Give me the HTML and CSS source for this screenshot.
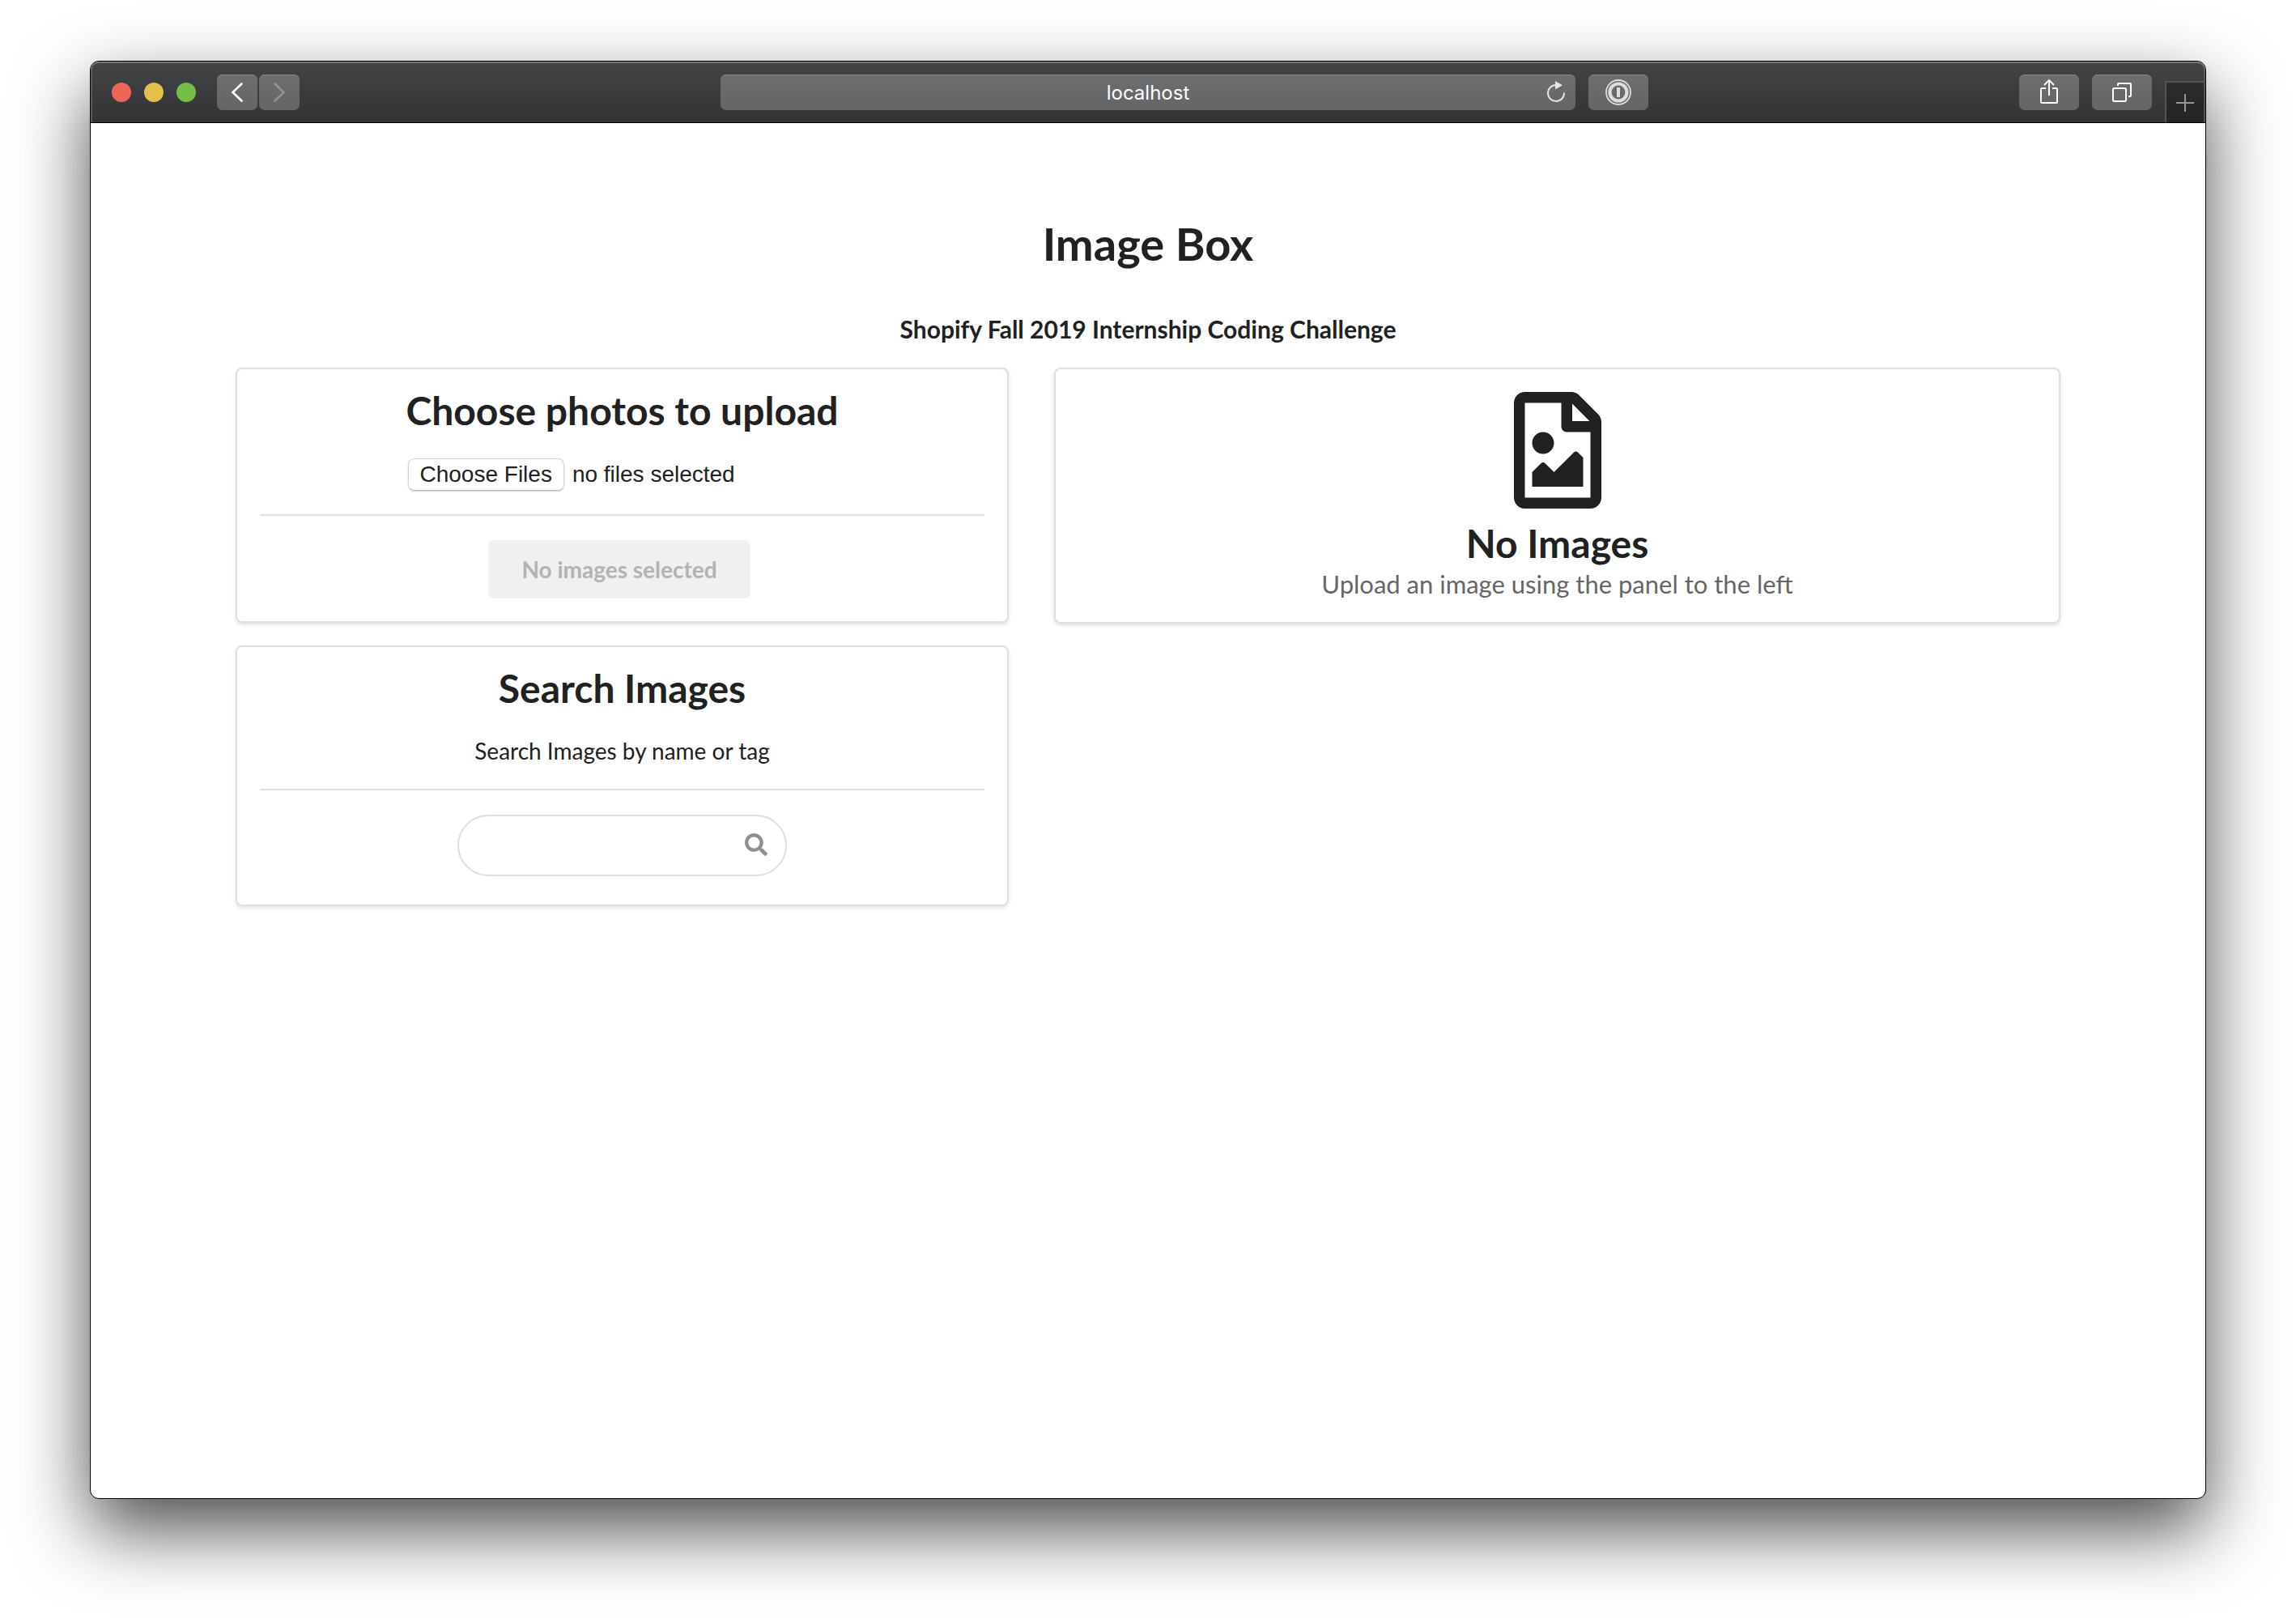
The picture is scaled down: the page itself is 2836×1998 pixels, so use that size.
FILE: index.html
```html
<!DOCTYPE html>
<html lang="en">
<head>
<meta charset="utf-8">
<title>Image Box</title>
<link rel="stylesheet" href="styles.css">
</head>
<body>
<div class="window">
  <header class="toolbar">
    <div class="toolbar-start">
      <div class="lights">
        <button class="light light-close" type="button" aria-label="Close"></button>
        <button class="light light-minimize" type="button" aria-label="Minimize"></button>
        <button class="light light-zoom" type="button" aria-label="Zoom"></button>
      </div>
      <nav class="history">
        <button class="tool tool-nav" type="button" aria-label="Back">
          <svg width="50" height="44" viewBox="0 0 50 44" fill="none" stroke="#fff" stroke-width="2.6" stroke-linecap="round"><path d="M30.5 11.5 19.5 22l11 10.500"/></svg>
        </button>
        <button class="tool tool-nav" type="button" aria-label="Forward" disabled>
          <svg width="50" height="44" viewBox="0 0 50 44" fill="none" stroke="#929394" stroke-width="2.6" stroke-linecap="round"><path d="M19.500 11.5l11 10.500-11 10.500"/></svg>
        </button>
      </nav>
    </div>
    <div class="address">
      <input class="address-input" type="text" value="localhost" aria-label="Address">
      <button class="reload" type="button" aria-label="Reload">
        <svg width="32" height="32" viewBox="0 0 32 32"><path d="M26 15.500A10 10 0 1 1 16 6" fill="none" stroke="#e4e4e5" stroke-width="2"/><path d="M15 1l9 5.300-9 5.300z" fill="#e4e4e5"/></svg>
      </button>
    </div>
    <div class="toolbar-end">
      <button class="tool" type="button" aria-label="Password manager">
        <svg width="74" height="44" viewBox="0 0 74 44" fill="none" stroke="#dcddde"><circle cx="37" cy="22" r="15" stroke-width="1.800"/><circle cx="37" cy="22" r="10.500" stroke-width="4.200"/><path d="M37 16v12" stroke-width="4"/></svg>
      </button>
      <button class="tool tool-share" type="button" aria-label="Share">
        <svg width="74" height="44" viewBox="0 0 74 44" fill="none" stroke="#fff" stroke-width="2" stroke-linejoin="round"><path d="M33 17h-5a1 1 0 0 0-1 1v16a1 1 0 0 0 1 1h18a1 1 0 0 0 1-1V18a1 1 0 0 0-1-1h-5M37 26V7M31 13l6-6 6 6"/></svg>
      </button>
      <button class="tool" type="button" aria-label="Show all tabs">
        <svg width="74" height="44" viewBox="0 0 74 44" fill="none" stroke="#fff" stroke-width="2"><rect x="26" y="17" width="16" height="16" rx="1.500"/><path d="M32 14v-2a1 1 0 0 1 1-1h14a1 1 0 0 1 1 1v14a1 1 0 0 1-1 1h-2"/></svg>
      </button>
      <button class="new-tab" type="button" aria-label="New tab">
        <svg width="22" height="22" viewBox="0 0 22 22" stroke="#949596" stroke-width="2"><path d="M11 0v22M0 11h22"/></svg>
      </button>
    </div>
  </header>

  <main class="page">
    <h1 class="title">Image Box</h1>
    <p class="subtitle">Shopify Fall 2019 Internship Coding Challenge</p>

    <div class="columns">
      <div class="side">
        <section class="card">
          <h2 class="card-title">Choose photos to upload</h2>
          <label class="file">
            <input class="file-input" type="file" multiple>
            <span class="file-button">Choose Files</span>
            <span class="file-status">no files selected</span>
          </label>
          <hr class="divider">
          <button class="upload" type="button" disabled>No images selected</button>
        </section>

        <section class="card">
          <h2 class="card-title">Search Images</h2>
          <label class="card-text" for="search">Search Images by name or tag</label>
          <hr class="divider">
          <div class="search">
            <input class="search-input" id="search" type="text">
            <svg class="search-icon" width="28" height="28" viewBox="0 0 512 512" fill="#8f8f8f"><path d="M505 442.700L405.300 343c-4.500-4.500-10.600-7-17-7H372c27.600-35.300 44-79.700 44-128C416 93.100 322.900 0 208 0S0 93.100 0 208s93.100 208 208 208c48.300 0 92.700-16.400 128-44v16.300c0 6.400 2.500 12.500 7 17l99.700 99.700c9.400 9.400 24.600 9.400 33.900 0l28.300-28.300c9.400-9.400 9.400-24.600.1-34zM208 336c-70.700 0-128-57.200-128-128 0-70.700 57.200-128 128-128 70.700 0 128 57.200 128 128 0 70.700-57.200 128-128 128z"/></svg>
          </div>
        </section>
      </div>

      <section class="card">
        <svg class="empty-icon" width="108" height="144" viewBox="0 0 384 512" fill="#212121"><path d="M369.900 97.900L286 14C277 5 264.800-.1 252.100-.1H48C21.500 0 0 21.500 0 48v416c0 26.500 21.500 48 48 48h288c26.500 0 48-21.500 48-48V131.900c0-12.700-5.100-25-14.100-34zM332.100 128H256V51.900l76.100 76.100zM48 464V48h160v104c0 13.300 10.700 24 24 24h104v288H48zm32-48h224V288l-23.500-23.500c-4.700-4.700-12.300-4.700-17 0L176 352l-39.500-39.500c-4.700-4.700-12.300-4.700-17 0L80 352v64zm48-240c-26.500 0-48 21.500-48 48s21.500 48 48 48 48-21.500 48-48-21.500-48-48-48z"/></svg>
        <h2 class="card-title">No Images</h2>
        <p class="empty-text">Upload an image using the panel to the left</p>
      </section>
    </div>
  </main>
</div>
</body>
</html>
```
FILE: styles.css
```css
* {
  box-sizing: border-box;
}

body {
  margin: 0;
  padding: 75px 111px 147px;
  min-height: 100vh;
  display: flex;
  background: #fff;
  color: #212121;
  font-family: Lato, sans-serif;
  font-size: 28px;
  line-height: 36px;
}

button,
input {
  margin: 0;
  padding: 0;
  border: 0;
  font: inherit;
}

svg {
  display: block;
}

h1,
h2,
p {
  margin: 0;
}

/* Browser window */
.window {
  flex: 1;
  min-width: 0;
  border: 1px solid #000;
  border-radius: 11px;
  background: #fff;
  box-shadow: 0 38px 90px rgba(0, 0, 0, 0.7);
}

.toolbar {
  display: grid;
  grid-template-columns: 778fr 1056fr 778fr;
  align-items: center;
  height: 76px;
  border-bottom: 1px solid #000;
  border-radius: 10px 10px 0 0;
  background: linear-gradient(#434446, #323335);
  box-shadow: inset 0 2px 0 #747577, inset 2px 0 0 #5a5b5d, inset -2px 0 0 #5a5b5d;
}

.toolbar-start {
  display: flex;
  align-items: center;
  gap: 26px;
  padding-left: 26px;
}

.lights {
  display: flex;
  gap: 16px;
}

.light {
  width: 24px;
  height: 24px;
  border-radius: 50%;
}

.light-close {
  background: #ee6459;
}

.light-minimize {
  background: #e1c04c;
}

.light-zoom {
  background: #72be47;
}

.history {
  display: flex;
  gap: 2px;
}

.tool,
.address {
  height: 44px;
  border-radius: 7px;
  background: linear-gradient(#6d6e70, #646567);
  box-shadow: inset 0 1px 0 #858688;
}

.tool {
  width: 74px;
}

.tool-nav {
  width: 50px;
}

.address {
  position: relative;
}

.address-input {
  display: block;
  width: 100%;
  height: 44px;
  padding-top: 2px;
  background: transparent;
  color: #fff;
  font-family: Inter, sans-serif;
  font-size: 24px;
  text-align: center;
}

.reload {
  position: absolute;
  top: 7px;
  right: 8px;
  width: 32px;
  height: 32px;
  background: transparent;
}

.toolbar-end {
  display: flex;
  align-items: center;
  gap: 16px;
  height: 75px;
  padding-left: 16px;
}

.tool-share {
  margin-left: auto;
}

.new-tab {
  display: grid;
  place-items: center;
  align-self: flex-end;
  width: 50px;
  height: 51px;
  border: solid #535456;
  border-width: 2px 2px 0;
  background: linear-gradient(#2b2c2d, #242425);
}

/* Page */
.page {
  padding: 120px 179px;
}

.title {
  font-size: 56px;
  line-height: 58px;
  text-align: center;
}

.subtitle {
  margin-top: 58px;
  font-size: 30px;
  font-weight: bold;
  text-align: center;
}

.columns {
  display: grid;
  grid-template-columns: 955fr 1243fr;
  align-items: start;
  gap: 56px;
  margin-top: 30px;
}

.side {
  display: grid;
  gap: 28px;
}

.card {
  display: flex;
  flex-direction: column;
  align-items: center;
  padding: 28px;
  border: 2px solid #dededf;
  border-radius: 8px;
  box-shadow: 0 2px 4px rgba(34, 36, 38, 0.15);
}

.card-title {
  font-size: 48px;
  line-height: 46px;
}

.card-text {
  margin-top: 36px;
}

.divider {
  align-self: stretch;
  height: 2px;
  margin: 29px 0 30px;
  border: 0;
  background: #dededf;
}

.file {
  display: flex;
  align-items: center;
  gap: 10px;
  width: 530px;
  margin-top: 36px;
  font-family: "Liberation Sans", sans-serif;
}

.file-input {
  position: absolute;
  width: 1px;
  height: 1px;
  opacity: 0;
}

.file-button {
  height: 40px;
  padding: 0 14px;
  border: 1px solid #d4d4d4;
  border-bottom-color: #b8b8b8;
  border-radius: 8px;
  box-shadow: 0 1px 2px rgba(0, 0, 0, 0.2);
  line-height: 38px;
}

.upload {
  height: 72px;
  margin-right: 7px;
  padding: 0 41px;
  border-radius: 8px;
  background: #f0f0f0;
  color: #b3b3b3;
  font-weight: bold;
}

.search {
  position: relative;
  margin-bottom: 7px;
}

.search-input {
  display: block;
  width: 407px;
  height: 76px;
  padding: 0 74px 0 28px;
  border: 2px solid #dededf;
  border-radius: 38px;
}

.search-icon {
  position: absolute;
  top: 23px;
  right: 24px;
}

.empty-icon {
  margin-bottom: 20px;
}

.empty-text {
  margin-top: 8px;
  color: #666;
  font-size: 31px;
  line-height: 38px;
}
```
